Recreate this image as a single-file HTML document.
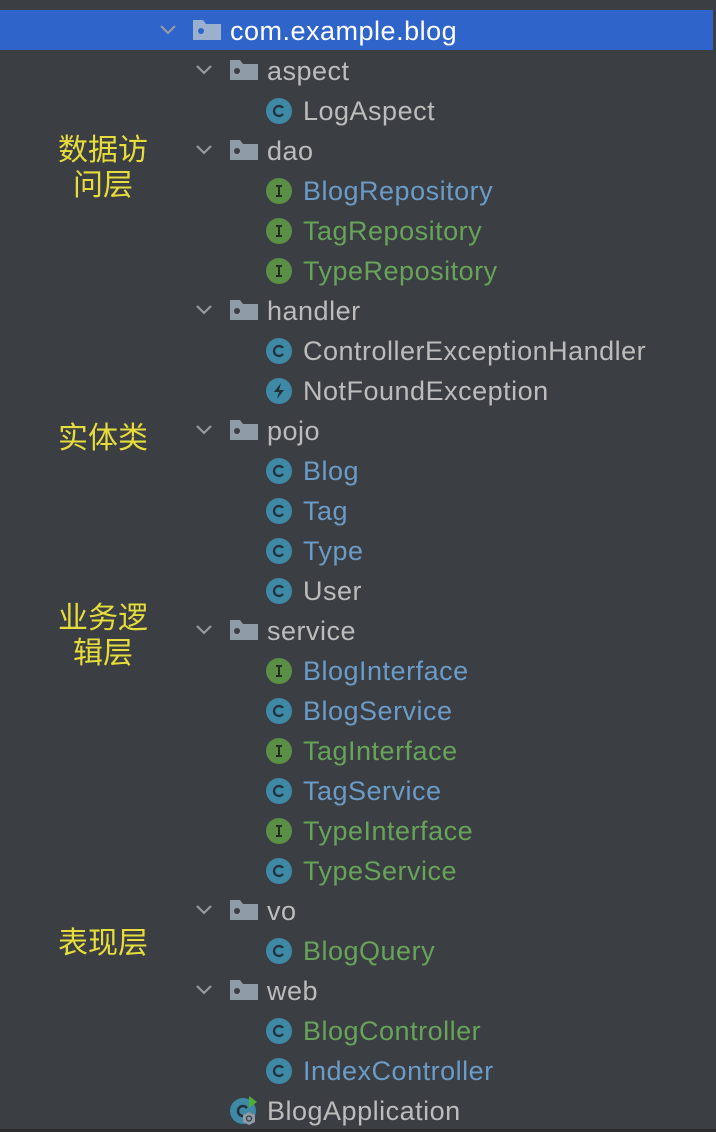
<!DOCTYPE html>
<html><head><meta charset="utf-8"><style>
body{margin:0;width:716px;height:1132px;background:#3b3e42;position:relative;overflow:hidden;font-family:"Liberation Sans","Noto Sans CJK SC",sans-serif}
.r{position:absolute;left:0;height:40px;line-height:41px;font-size:27px;letter-spacing:0.5px;color:#bcbcbc;white-space:nowrap}
.sel{position:absolute;left:0;top:10px;width:713px;height:40px;background:#2f65ca}
.b{color:#6b9bc7}.g{color:#68a35a}
svg{position:absolute}
.lab{position:absolute;left:44px;width:118px;text-align:center;color:#e6dd3c;font-size:30px;line-height:35px;font-family:"Noto Sans CJK SC",sans-serif}
</style></head><body>
<div class="sel"></div>
<div style="position:absolute;left:0;top:1129px;width:716px;height:3px;background:#2b2b2b"></div>
<svg width="0" height="0"><defs>
<g id="fold"><path d="M0 2h10l3 4h15v16H0z" fill="#8f9ba6"/><circle cx="7" cy="13" r="3" fill="#3b3e42"/></g>
<g id="chev"><path d="M1 1l7 7 7-7" fill="none" stroke="#9a9ea3" stroke-width="2"/></g>
<g id="cc"><circle cx="13" cy="13" r="13" fill="#3d89a6"/><path d="M17 10a5 5 0 1 0 0 6" fill="none" stroke="#223038" stroke-width="2.2"/></g>
<g id="ii"><circle cx="13" cy="13" r="13" fill="#5a8f45"/><path d="M10 8h6M10 18h6M13 8v10" stroke="#22301f" stroke-width="2"/></g>
<g id="ee"><circle cx="13" cy="13" r="13" fill="#3d89a6"/><path d="M15 5l-7 9h5l-2 7 7-9h-5z" fill="#223038"/></g>
</defs></svg>

<svg style="left:160px;top:25px" width="16" height="10"><use href="#chev"/></svg>
<svg style="left:193px;top:18px" width="28" height="24"><path d="M0 2h10l3 4h15v16H0z" fill="#9bb0cc"/><circle cx="8" cy="13" r="3" fill="#2f65ca"/></svg>
<div class="r" style="left:230px;top:11px;color:#fff">com.example.blog</div>

<div class="lab" style="top:130px">数据访<br>问层</div>
<div class="lab" style="top:418px">实体类</div>
<div class="lab" style="top:598px">业务逻<br>辑层</div>
<div class="lab" style="top:923px">表现层</div>

<svg style="left:196px;top:65px" width="16" height="10"><use href="#chev"/></svg><svg style="left:230px;top:58px" width="28" height="24"><use href="#fold"/></svg><div class="r" style="left:267px;top:51px">aspect</div>
<svg style="left:196px;top:145px" width="16" height="10"><use href="#chev"/></svg><svg style="left:230px;top:138px" width="28" height="24"><use href="#fold"/></svg><div class="r" style="left:267px;top:131px">dao</div>
<svg style="left:196px;top:305px" width="16" height="10"><use href="#chev"/></svg><svg style="left:230px;top:298px" width="28" height="24"><use href="#fold"/></svg><div class="r" style="left:267px;top:291px">handler</div>
<svg style="left:196px;top:425px" width="16" height="10"><use href="#chev"/></svg><svg style="left:230px;top:418px" width="28" height="24"><use href="#fold"/></svg><div class="r" style="left:267px;top:411px">pojo</div>
<svg style="left:196px;top:625px" width="16" height="10"><use href="#chev"/></svg><svg style="left:230px;top:618px" width="28" height="24"><use href="#fold"/></svg><div class="r" style="left:267px;top:611px">service</div>
<svg style="left:196px;top:905px" width="16" height="10"><use href="#chev"/></svg><svg style="left:230px;top:898px" width="28" height="24"><use href="#fold"/></svg><div class="r" style="left:267px;top:891px">vo</div>
<svg style="left:196px;top:985px" width="16" height="10"><use href="#chev"/></svg><svg style="left:230px;top:978px" width="28" height="24"><use href="#fold"/></svg><div class="r" style="left:267px;top:971px">web</div>

<svg style="left:266px;top:98px" width="26" height="26"><use href="#cc"/></svg><div class="r" style="left:303px;top:91px">LogAspect</div>
<svg style="left:266px;top:178px" width="26" height="26"><use href="#ii"/></svg><div class="r b" style="left:303px;top:171px">BlogRepository</div>
<svg style="left:266px;top:218px" width="26" height="26"><use href="#ii"/></svg><div class="r g" style="left:303px;top:211px">TagRepository</div>
<svg style="left:266px;top:258px" width="26" height="26"><use href="#ii"/></svg><div class="r g" style="left:303px;top:251px">TypeRepository</div>
<svg style="left:266px;top:338px" width="26" height="26"><use href="#cc"/></svg><div class="r" style="left:303px;top:331px">ControllerExceptionHandler</div>
<svg style="left:266px;top:378px" width="26" height="26"><use href="#ee"/></svg><div class="r" style="left:303px;top:371px">NotFoundException</div>
<svg style="left:266px;top:458px" width="26" height="26"><use href="#cc"/></svg><div class="r b" style="left:303px;top:451px">Blog</div>
<svg style="left:266px;top:498px" width="26" height="26"><use href="#cc"/></svg><div class="r b" style="left:303px;top:491px">Tag</div>
<svg style="left:266px;top:538px" width="26" height="26"><use href="#cc"/></svg><div class="r b" style="left:303px;top:531px">Type</div>
<svg style="left:266px;top:578px" width="26" height="26"><use href="#cc"/></svg><div class="r" style="left:303px;top:571px">User</div>
<svg style="left:266px;top:658px" width="26" height="26"><use href="#ii"/></svg><div class="r b" style="left:303px;top:651px">BlogInterface</div>
<svg style="left:266px;top:698px" width="26" height="26"><use href="#cc"/></svg><div class="r b" style="left:303px;top:691px">BlogService</div>
<svg style="left:266px;top:738px" width="26" height="26"><use href="#ii"/></svg><div class="r g" style="left:303px;top:731px">TagInterface</div>
<svg style="left:266px;top:778px" width="26" height="26"><use href="#cc"/></svg><div class="r b" style="left:303px;top:771px">TagService</div>
<svg style="left:266px;top:818px" width="26" height="26"><use href="#ii"/></svg><div class="r g" style="left:303px;top:811px">TypeInterface</div>
<svg style="left:266px;top:858px" width="26" height="26"><use href="#cc"/></svg><div class="r g" style="left:303px;top:851px">TypeService</div>
<svg style="left:266px;top:938px" width="26" height="26"><use href="#cc"/></svg><div class="r g" style="left:303px;top:931px">BlogQuery</div>
<svg style="left:266px;top:1018px" width="26" height="26"><use href="#cc"/></svg><div class="r g" style="left:303px;top:1011px">BlogController</div>
<svg style="left:266px;top:1058px" width="26" height="26"><use href="#cc"/></svg><div class="r b" style="left:303px;top:1051px">IndexController</div>

<svg style="left:229px;top:1094px" width="34" height="34"><circle cx="14" cy="17" r="13" fill="#3d89a6"/><path d="M18 14a5 5 0 1 0 0 6" fill="none" stroke="#223038" stroke-width="2.4"/><path d="M20 2l8 6-8 6z" fill="#4fae3a"/><path d="M20 18l6 3v7l-6 3-6-3v-7z" fill="#8f9ba6"/><circle cx="20" cy="24.5" r="2.5" fill="none" stroke="#3b3e42" stroke-width="1.3"/></svg>
<div class="r" style="left:267px;top:1091px">BlogApplication</div>
</body></html>
